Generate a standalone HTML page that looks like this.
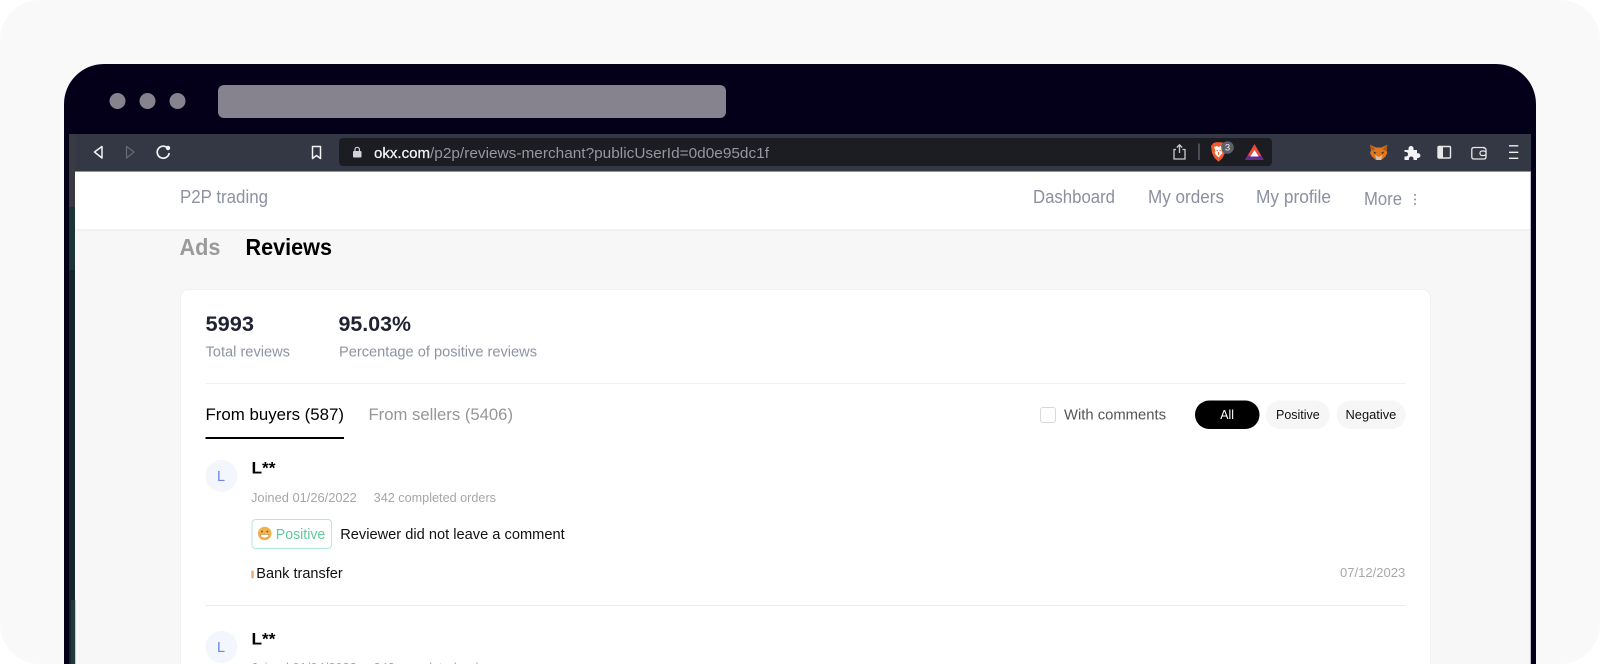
<!DOCTYPE html>
<html><head><meta charset="utf-8"><title>OKX reviews</title>
<style>
html,body{margin:0;padding:0;width:1600px;height:664px;overflow:hidden;background:#fff}
svg{display:block}
text{font-family:"Liberation Sans",Arial,sans-serif}
</style></head><body>
<svg width="1600" height="664" viewBox="0 0 1600 664" xmlns="http://www.w3.org/2000/svg">
<defs><clipPath id="fr"><path d="M64 664V104a40 40 0 0 1 40-40H1496a40 40 0 0 1 40 40V664Z"/></clipPath>
<linearGradient id="sh" x1="0" y1="0" x2="0" y2="1"><stop offset="0" stop-color="#efefef"/><stop offset="1" stop-color="#f7f7f7"/></linearGradient></defs>
<rect x="0" y="0" width="1600" height="664" rx="40" fill="#f9f9f9"/>
<g clip-path="url(#fr)">
<rect x="64" y="64" width="1472" height="600" fill="#04001a"/>
<circle cx="117.500" cy="101" r="8" fill="#86838e"/><circle cx="147.500" cy="101" r="8" fill="#86838e"/><circle cx="177.500" cy="101" r="8" fill="#86838e"/>
<rect x="218" y="85" width="508" height="33" rx="6" fill="#86838e"/>
<!-- left strip -->
<rect x="69" y="134" width="6" height="73" fill="#3a3a42"/>
<rect x="69" y="207" width="6" height="63" fill="#1b3436"/>
<rect x="69" y="270" width="6" height="394" fill="#162628"/>
<rect x="71" y="600" width="4" height="64" fill="#22393a"/>
<!-- toolbar -->
<rect x="75" y="134" width="1456" height="38" fill="#343744"/>
<rect x="75" y="171" width="1456" height="1" fill="#8f919b"/>
<rect x="339" y="138" width="933" height="28" rx="4" fill="#1c1d22"/>
<!-- nav icons -->
<path d="M94.500 152L102 146.500V158Z" fill="none" stroke="#f4f4f6" stroke-width="1.500" stroke-linejoin="round"/>
<path d="M134 152L126.500 146.500V158Z" fill="none" stroke="#666a76" stroke-width="1.300" stroke-linejoin="round"/>
<path d="M168 148.500A6 6 0 1 0 169.200 153" fill="none" stroke="#f4f4f6" stroke-width="1.700"/>
<circle cx="168" cy="148" r="2.200" fill="#f4f4f6"/>
<path d="M312.500 146.500H320.500V158.500L316.500 155.500L312.500 158.500Z" fill="none" stroke="#f4f4f6" stroke-width="1.500" stroke-linejoin="round"/>
<rect x="353" y="151" width="8.500" height="6.500" rx="1" fill="#d4d4d8"/>
<path d="M355 151.500V149.500a2.200 2.200 0 0 1 4.400 0V151.500" fill="none" stroke="#d4d4d8" stroke-width="1.200"/>
<text x="374" y="158" font-size="15" fill="#f4f4f6" textLength="56" lengthAdjust="spacingAndGlyphs" stroke="#f4f4f6" stroke-width=".25">okx.com</text>
<text x="430" y="158" font-size="15" fill="#96979e" textLength="339" lengthAdjust="spacingAndGlyphs">/p2p/reviews-merchant?publicUserId=0d0e95dc1f</text>
<!-- share / brave -->
<path d="M1176 149.500H1174V159H1185V149.500H1182.500M1179.500 153V145M1176.800 147.500L1179.500 144.800L1182.200 147.500" fill="none" stroke="#c9cace" stroke-width="1.300"/>
<rect x="1198.500" y="143.500" width="1" height="16.500" fill="#777a82"/>
<path d="M1213.500 143L1216 142.300H1221L1224 143L1226 146L1225 153L1222.500 158L1218.500 161.700L1214.500 158L1212 153L1211 146Z" fill="#f0592a"/>
<path d="M1214 147L1217 146L1218.500 147L1220.500 146L1223 147.500L1221.500 151L1222.500 153L1218.500 157.500L1214.500 153L1215.500 151Z" fill="#fff"/>
<path d="M1216.500 150L1218 151M1221 150L1219.500 151M1218.500 152V155" stroke="#f0592a" stroke-width="1"/>
<circle cx="1227.500" cy="147.500" r="6.300" fill="#5d5f6b"/>
<text x="1227.500" y="150.700" font-size="9.500" fill="#f0f0f2" text-anchor="middle">3</text>
<path d="M1254.500 144L1263.800 160H1245Z" fill="#ef4a3c"/>
<path d="M1245 160H1263.800L1261.300 155.800H1247.600Z" fill="#662d91"/>
<path d="M1254.500 150L1258.700 156.500H1250.300Z" fill="#fff"/>
<!-- fox -->
<path d="M1370 144.800L1376 147.500H1381.500L1387.300 144.800L1386.500 150.500L1387.300 153L1385.500 156.500L1381.500 160H1376L1372 156.500L1370 153L1371 150.500Z" fill="#e2761b"/>
<path d="M1375 155L1378.700 157L1382.500 155L1381 160H1376.500Z" fill="#d7c1b3"/>
<path d="M1373.500 151.500L1376.500 152.800L1374.500 154ZM1384 151.500L1381 152.800L1383 154Z" fill="#233447"/>
<path d="M1370 144.800L1375 149L1372 151ZM1387.300 144.800L1382.500 149L1385.500 151Z" fill="#a85c18"/>
<!-- puzzle -->
<path d="M1404.500 150H1408.500V148.500a2.500 2.500 0 0 1 5 0V150H1417V153.200H1418a2.400 2.400 0 0 1 0 4.800H1417V160H1413.500V158.800a2.300 2.300 0 0 0-4.600 0V160H1404.500V156.500H1405.800a2.300 2.300 0 0 0 0-4.600H1404.500Z" fill="#f4f4f6"/>
<!-- sidebar -->
<rect x="1438" y="146.500" width="12.500" height="11.500" rx="1" fill="none" stroke="#e8e8ea" stroke-width="1.400"/>
<rect x="1438" y="146.500" width="5" height="11.500" fill="#e8e8ea"/>
<!-- wallet -->
<path d="M1484 148V147.500H1474C1472.500 147.500 1471.800 148.300 1471.800 149.500V157C1471.800 158.200 1472.500 159 1474 159H1484C1485.200 159 1486 158.200 1486 157V150C1486 148.800 1485.200 148 1484 148Z" fill="none" stroke="#e8e8ea" stroke-width="1.300"/>
<rect x="1480" y="151" width="6" height="4.500" rx="2" fill="#343744" stroke="#e8e8ea" stroke-width="1.200"/>
<!-- menu -->
<path d="M1509 145.800H1518.300M1509 152.300H1518.300M1509 158.300H1518.300" stroke="#f0f0f2" stroke-width="1.300"/>
<!-- page -->
<rect x="75" y="229" width="1456" height="435" fill="#f7f7f7"/>
<rect x="75" y="172" width="1456" height="57" fill="#fff"/>
<rect x="75" y="229" width="1456" height="3" fill="url(#sh)"/>
<rect x="75" y="600" width="1" height="64" fill="#c9cccc"/>
<rect x="1530" y="172" width="1" height="492" fill="#c4c4c8"/>
<text x="180" y="203" font-size="18" fill="#8e92a2" textLength="88" lengthAdjust="spacingAndGlyphs">P2P trading</text>
<text x="1033" y="203" font-size="18" fill="#8b8fa0" textLength="82" lengthAdjust="spacingAndGlyphs">Dashboard</text>
<text x="1148" y="203" font-size="18" fill="#8b8fa0" textLength="76" lengthAdjust="spacingAndGlyphs">My orders</text>
<text x="1256" y="203" font-size="18" fill="#8b8fa0" textLength="75" lengthAdjust="spacingAndGlyphs">My profile</text>
<text x="1364" y="205" font-size="18" fill="#8b8fa0" textLength="38" lengthAdjust="spacingAndGlyphs">More</text>
<circle cx="1415" cy="195" r="1" fill="#8b8fa0"/><circle cx="1415" cy="199.500" r="1" fill="#8b8fa0"/><circle cx="1415" cy="204" r="1" fill="#8b8fa0"/>
<text x="179.500" y="255" font-size="23" font-weight="700" fill="#9a9a9a" textLength="41" lengthAdjust="spacingAndGlyphs">Ads</text>
<text x="245.500" y="255" font-size="23" font-weight="700" fill="#000" textLength="86.500" lengthAdjust="spacingAndGlyphs">Reviews</text>
<!-- card -->
<rect x="180.500" y="289.500" width="1250" height="400" rx="8" fill="#fff" stroke="#f1f1f3"/>
<text x="205.500" y="331" font-size="21" font-weight="700" fill="#1f2230" textLength="48.500" lengthAdjust="spacingAndGlyphs">5993</text>
<text x="338.500" y="331" font-size="21" font-weight="700" fill="#1f2230" textLength="72.500" lengthAdjust="spacingAndGlyphs">95.03%</text>
<text x="205.500" y="356.500" font-size="15" fill="#8e93a3" textLength="84.500" lengthAdjust="spacingAndGlyphs">Total reviews</text>
<text x="339" y="356.500" font-size="15" fill="#8e93a3" textLength="198" lengthAdjust="spacingAndGlyphs">Percentage of positive reviews</text>
<rect x="205.500" y="383" width="1200" height="1" fill="#f2f2f2"/>
<text x="205.500" y="420" font-size="17" fill="#000" textLength="138.500" lengthAdjust="spacingAndGlyphs">From buyers (587)</text>
<text x="368.500" y="420" font-size="17" fill="#969696" textLength="144.500" lengthAdjust="spacingAndGlyphs">From sellers (5406)</text>
<rect x="205.500" y="437" width="138.500" height="2" fill="#000"/>
<rect x="1040.500" y="407.500" width="15" height="15" rx="2.500" fill="#fff" stroke="#d9d9d9"/>
<text x="1064" y="419.500" font-size="15" fill="#555" textLength="102" lengthAdjust="spacingAndGlyphs">With comments</text>
<rect x="1195" y="400.500" width="64.500" height="28.500" rx="14.250" fill="#000"/>
<text x="1220.300" y="419" font-size="12.500" fill="#fff" textLength="13.700" lengthAdjust="spacingAndGlyphs">All</text>
<rect x="1266" y="400.500" width="63.700" height="28.500" rx="14.250" fill="#f6f6f6"/>
<text x="1276" y="419" font-size="12.500" fill="#111" textLength="43.700" lengthAdjust="spacingAndGlyphs">Positive</text>
<rect x="1336.700" y="400.500" width="69" height="28.500" rx="14.250" fill="#f6f6f6"/>
<text x="1345.500" y="419" font-size="12.500" fill="#111" textLength="50.800" lengthAdjust="spacingAndGlyphs">Negative</text>
<!-- review 1 -->
<circle cx="221.500" cy="476" r="16" fill="#f3f6fd"/>
<text x="217" y="481" font-size="14.500" fill="#6b86e8">L</text>
<text x="251.500" y="473.500" font-size="17" font-weight="700" fill="#000" textLength="24" lengthAdjust="spacingAndGlyphs">L**</text>
<text x="251" y="502" font-size="12.500" fill="#a6a6a6" textLength="105.800" lengthAdjust="spacingAndGlyphs">Joined 01/26/2022</text>
<text x="373.700" y="502" font-size="12.500" fill="#a6a6a6" textLength="122.300" lengthAdjust="spacingAndGlyphs">342 completed orders</text>
<rect x="252" y="519.500" width="79.500" height="29" rx="3.500" fill="#fff" stroke="#b5ead7"/>
<circle cx="264.700" cy="533.500" r="6.800" fill="#f2b14f"/>
<path d="M260.500 534.500H268.900C268.900 536.800 267.200 537.900 264.700 537.900S260.500 536.800 260.500 534.500Z" fill="#fff" stroke="#9a6a2c" stroke-width=".4"/>
<circle cx="262" cy="531.500" r=".9" fill="#7a4f1c"/><circle cx="267.400" cy="531.500" r=".9" fill="#7a4f1c"/>
<text x="275.800" y="539" font-size="15" fill="#5fcb9b" textLength="49.500" lengthAdjust="spacingAndGlyphs">Positive</text>
<text x="340.200" y="539" font-size="15" fill="#111" textLength="224.500" lengthAdjust="spacingAndGlyphs">Reviewer did not leave a comment</text>
<rect x="251.300" y="570.700" width="2.400" height="7.600" fill="#f4a56c"/>
<text x="256.300" y="578" font-size="15" fill="#111" textLength="86.400" lengthAdjust="spacingAndGlyphs">Bank transfer</text>
<text x="1340" y="577" font-size="12.500" fill="#a8a8a8" textLength="65.300" lengthAdjust="spacingAndGlyphs">07/12/2023</text>
<rect x="205.500" y="605" width="1200" height="1" fill="#ececec"/>
<!-- review 2 -->
<circle cx="221.500" cy="647" r="16" fill="#f3f6fd"/>
<text x="217" y="652" font-size="14.500" fill="#6b86e8">L</text>
<text x="251.500" y="644.500" font-size="17" font-weight="700" fill="#000" textLength="24" lengthAdjust="spacingAndGlyphs">L**</text>
<text x="251" y="672" font-size="12.500" fill="#a6a6a6" textLength="105.800" lengthAdjust="spacingAndGlyphs">Joined 01/04/2022</text>
<text x="373.700" y="672" font-size="12.500" fill="#a6a6a6" textLength="122.300" lengthAdjust="spacingAndGlyphs">342 completed orders</text>
</g>
</svg>
</body></html>
